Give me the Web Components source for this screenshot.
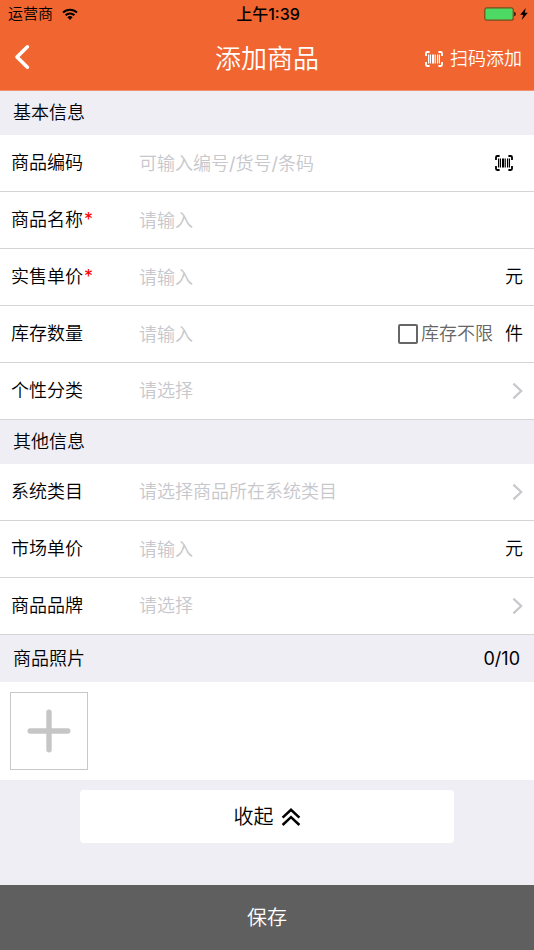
<!DOCTYPE html>
<html lang="zh-CN">
<head>
<meta charset="utf-8">
<meta name="viewport" content="width=device-width, initial-scale=1">
<title>添加商品</title>
<style>
	html {
		--brand-color: #f16531;
		--page-bg-color: #efeef4;
		--line-color: #d4d4d6;
		--placeholder-color: #c7c7cc;
		--footer-bg-color: #5f5f5f;
	}

	body {
		margin: 0;
		min-height: 100vh;
		display: flex;
		flex-direction: column;
		background-color: var(--page-bg-color);
		color: #000;
		font: 18px/26px Inter, "Noto Sans CJK SC DemiLight", "Noto Sans CJK SC", sans-serif;
	}

	main {
		flex: 1;
	}
</style>
</head>
<body>

<status-bar carrier="运营商" time="上午1:39"></status-bar>
<nav-bar>
	添加商品
	<span slot="action">扫码添加</span>
</nav-bar>

<main>
	<form-section caption="基本信息">
		<form-field label="商品编码" placeholder="可输入编号/货号/条码" scan></form-field>
		<form-field label="商品名称" placeholder="请输入" required></form-field>
		<form-field label="实售单价" placeholder="请输入" required unit="元"></form-field>
		<form-field label="库存数量" placeholder="请输入" unit="件">
			<check-option>库存不限</check-option>
		</form-field>
		<form-field label="个性分类" placeholder="请选择" picker></form-field>
	</form-section>

	<form-section caption="其他信息">
		<form-field label="系统类目" placeholder="请选择商品所在系统类目" picker></form-field>
		<form-field label="市场单价" placeholder="请输入" unit="元"></form-field>
		<form-field label="商品品牌" placeholder="请选择" picker></form-field>
	</form-section>

	<form-section caption="商品照片" note="0/10">
		<photo-picker></photo-picker>
	</form-section>

	<fold-button>收起</fold-button>
</main>

<save-bar>保存</save-bar>

<script>
const ICONS = {
	wifi: {
		width: 16,
		height: 12,
		body: `
			<g fill="none" stroke="currentColor" stroke-width="2">
				<path d="M1 4.6a10 10 0 0 1 14 0"/>
				<path d="M3.6 7.3a6.2 6.2 0 0 1 8.8 0"/>
			</g>
			<path d="M8 12 5.4 9.3a3.7 3.7 0 0 1 5.2 0z" fill="currentColor"/>`
	},
	battery: {
		width: 32,
		height: 14,
		body: `
			<rect x=".8" y=".8" width="28.4" height="12.4" rx="2" fill="#4cd964" stroke="#7d4a1c" stroke-width="1.2"/>
			<path d="M30.3 4.8c1.8.4 1.8 4 0 4.4z" fill="#000"/>`
	},
	bolt: {
		width: 8,
		height: 12,
		body: '<path d="M5.8 0 .2 6.8h3L1.8 12l6-7.2H4.7z" fill="currentColor"/>'
	},
	back: {
		width: 16,
		height: 26,
		body: '<path d="M13.4 2.8 3 13l10.4 10.2" fill="none" stroke="currentColor" stroke-width="3.6" stroke-linecap="round" stroke-linejoin="round"/>'
	},
	scan: {
		width: 18,
		height: 16,
		body: `
			<path d="M4.6 1H2.2Q1 1 1 2.2v2.8M13.4 1h2.4Q17 1 17 2.2v2.8M4.6 15H2.2Q1 15 1 13.8V11M13.4 15h2.4q1.2 0 1.2-1.2V11" fill="none" stroke="currentColor" stroke-width="1.8"/>
			<path d="M3 3.5h1.3v9H3zM5 3.5h1v9H5zM7 3.5h2.4v9H7zM10.2 3.5h.8v9h-.8zM12 3.5h1v9h-1zM13.7 3.5H15v9h-1.3z" fill="currentColor"/>`
	},
	next: {
		width: 11,
		height: 18,
		body: '<path d="M1.4 1.6 9.2 9l-7.8 7.4" fill="none" stroke="currentColor" stroke-width="2.2"/>'
	},
	plus: {
		width: 44,
		height: 44,
		body: '<path d="M22 3.2v37.6M3.2 22h37.6" fill="none" stroke="currentColor" stroke-width="5.4" stroke-linecap="round"/>'
	},
	fold: {
		width: 20,
		height: 18,
		body: '<path d="M1.6 9.6 10 1.8l8.4 7.8M1.6 17 10 9.2l8.4 7.8" fill="none" stroke="currentColor" stroke-width="2.5"/>'
	}
};

class BaseElement extends HTMLElement {
	connectedCallback() {
		if (this.shadowRoot) {
			return;
		}

		const template = document.createElement('template');
		template.innerHTML = `
			<style>
				:host,
				* {
					box-sizing: border-box;
				}

				button {
					margin: 0;
					padding: 0;
					border: none;
					background: none;
					font: inherit;
					color: inherit;
					cursor: pointer;
				}
			</style>
			${this._getMarkup()}
		`;

		this.attachShadow({ mode: 'open' });
		this.shadowRoot.appendChild(template.content.cloneNode(true));
	}
}

class UiIcon extends BaseElement {
	_getMarkup() {
		const { width, height, body } = ICONS[this.getAttribute('name')];

		return `
			<style>
				:host {
					display: inline-flex;
					flex: none;
				}
			</style>
			<svg width="${width}" height="${height}" viewBox="0 0 ${width} ${height}" aria-hidden="true">${body}</svg>
		`;
	}
}

class StatusBar extends BaseElement {
	_getMarkup() {
		return `
			<style>
				:host {
					display: grid;
					grid-template-columns: 1fr auto 1fr;
					align-items: center;
					height: 28px;
					padding: 0 6px 0 8px;
					background-color: var(--brand-color);
					font-size: 15px;
					line-height: 28px;
				}

				.side {
					display: flex;
					align-items: center;
					gap: 9px;
				}

				.power {
					justify-content: flex-end;
					gap: 4px;
				}

				.time {
					font-family: Inter, "Noto Sans CJK SC", sans-serif;
					font-size: 16px;
					font-weight: 500;
				}
			</style>
			<div class="side">
				<span>${this.getAttribute('carrier')}</span>
				<ui-icon name="wifi"></ui-icon>
			</div>
			<div class="time">${this.getAttribute('time')}</div>
			<div class="side power">
				<ui-icon name="battery"></ui-icon>
				<ui-icon name="bolt"></ui-icon>
			</div>
		`;
	}
}

class NavBar extends BaseElement {
	_getMarkup() {
		return `
			<style>
				:host {
					display: grid;
					grid-template-columns: 1fr auto 1fr;
					align-items: center;
					height: 63px;
					padding: 0 12px;
					border-bottom: 1px solid #f0906c;
					background-color: var(--brand-color);
					color: #fff;
				}

				h1 {
					margin: 0;
					font-size: 26px;
					line-height: 38px;
					font-weight: inherit;
				}

				button {
					display: flex;
					align-items: center;
					justify-self: start;
					padding: 0 2px 5px;
				}

				.action {
					justify-self: end;
					gap: 7px;
					padding: 0;
				}
			</style>
			<button type="button" aria-label="返回"><ui-icon name="back"></ui-icon></button>
			<h1><slot></slot></h1>
			<button type="button" class="action">
				<ui-icon name="scan"></ui-icon>
				<slot name="action"></slot>
			</button>
		`;
	}
}

class FormSection extends BaseElement {
	_getMarkup() {
		return `
			<style>
				:host {
					display: block;
				}

				header {
					display: flex;
					align-items: center;
					justify-content: space-between;
					height: 44px;
					padding: 0 14px 0 13px;
				}

				:host([note]) header {
					height: 47px;
				}

				h2 {
					margin: 0;
					font: inherit;
				}

				.rows {
					background-color: #fff;
				}
			</style>
			<header>
				<h2>${this.getAttribute('caption')}</h2>
				<span>${this.getAttribute('note') || ''}</span>
			</header>
			<div class="rows"><slot></slot></div>
		`;
	}
}

class FormField extends BaseElement {
	_getMarkup() {
		const placeholder = this.getAttribute('placeholder');
		const unit = this.getAttribute('unit');

		const control = this.hasAttribute('picker')
			? `<button type="button" id="control" class="control picker">${placeholder}<ui-icon name="next"></ui-icon></button>`
			: `<input type="text" id="control" class="control" placeholder="${placeholder}">`;

		return `
			<style>
				:host {
					display: flex;
					align-items: center;
					height: 57px;
					padding: 0 11px;
					border-bottom: 1px solid var(--line-color);
				}

				label {
					flex: none;
					width: 128px;
				}

				.mark {
					margin-left: 1px;
					color: #f00;
				}

				.control {
					flex: 1;
					min-width: 0;
					height: 100%;
					padding: 0;
					border: none;
					outline: none;
					background: none;
					font: inherit;
				}

				.control::placeholder {
					color: var(--placeholder-color);
					opacity: 1;
				}

				.picker {
					display: flex;
					align-items: center;
					justify-content: space-between;
					color: var(--placeholder-color);
				}

				.scan {
					display: flex;
					margin-right: 10px;
				}

				.unit {
					margin-left: 12px;
				}
			</style>
			<label for="control">${this.getAttribute('label')}${this.hasAttribute('required') ? '<span class="mark">*</span>' : ''}</label>
			${control}
			<slot></slot>
			${this.hasAttribute('scan') ? '<button type="button" class="scan" aria-label="扫码"><ui-icon name="scan"></ui-icon></button>' : ''}
			${unit ? `<span class="unit">${unit}</span>` : ''}
		`;
	}
}

class CheckOption extends BaseElement {
	_getMarkup() {
		return `
			<style>
				:host {
					display: block;
					flex: none;
					color: #666;
				}

				label {
					display: flex;
					align-items: center;
					gap: 3px;
				}

				input {
					appearance: none;
					width: 20px;
					height: 20px;
					margin: 0;
					border: 2px solid #666;
					border-radius: 2px;
				}

				input:checked {
					background-color: var(--brand-color);
				}
			</style>
			<label><input type="checkbox"><slot></slot></label>
		`;
	}
}

class PhotoPicker extends BaseElement {
	_getMarkup() {
		return `
			<style>
				:host {
					display: flex;
					padding: 10px;
				}

				button {
					display: flex;
					align-items: center;
					justify-content: center;
					width: 78px;
					height: 78px;
					border: 1px solid #c8c8c8;
					color: #c6c6c6;
				}
			</style>
			<button type="button" aria-label="添加照片"><ui-icon name="plus"></ui-icon></button>
		`;
	}
}

class FoldButton extends BaseElement {
	_getMarkup() {
		return `
			<style>
				:host {
					display: flex;
					padding: 10px 15%;
				}

				button {
					flex: 1;
					display: flex;
					align-items: center;
					justify-content: center;
					gap: 7px;
					height: 53px;
					border-radius: 4px;
					background-color: #fff;
					font-size: 20px;
				}
			</style>
			<button type="button"><slot></slot><ui-icon name="fold"></ui-icon></button>
		`;
	}
}

class SaveBar extends BaseElement {
	_getMarkup() {
		return `
			<style>
				:host {
					display: flex;
				}

				button {
					flex: 1;
					height: 65px;
					background-color: var(--footer-bg-color);
					color: #fff;
					font-size: 20px;
				}
			</style>
			<button type="button"><slot></slot></button>
		`;
	}
}

customElements.define('ui-icon', UiIcon);
customElements.define('status-bar', StatusBar);
customElements.define('nav-bar', NavBar);
customElements.define('form-section', FormSection);
customElements.define('form-field', FormField);
customElements.define('check-option', CheckOption);
customElements.define('photo-picker', PhotoPicker);
customElements.define('fold-button', FoldButton);
customElements.define('save-bar', SaveBar);
</script>
</body>
</html>
